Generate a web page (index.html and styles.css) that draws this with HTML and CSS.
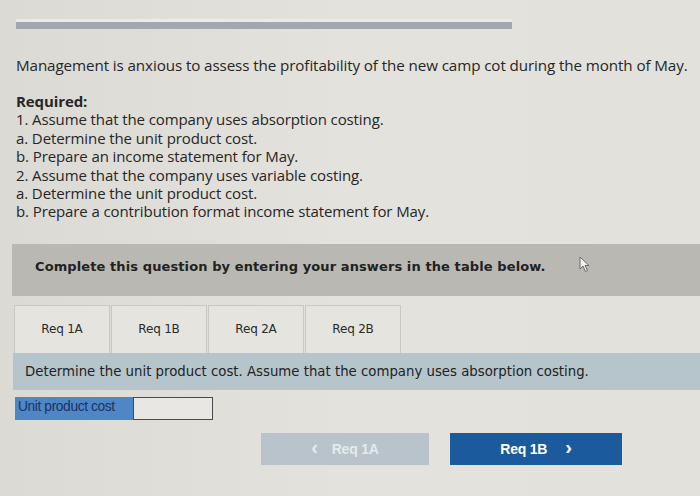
FILE: index.html
```html
<!DOCTYPE html>
<html>
<head>
<meta charset="utf-8">
<link rel="stylesheet" href="styles.css">
</head>
<body>
<div class="page">
  <div class="topbar">
    <div class="topbar-line"></div>
    <div class="topbar-fill"></div>
  </div>
  <p class="intro">Management is anxious to assess the profitability of the new camp cot during the month of May.</p>
  <div class="required">
    <div class="req-title">Required:</div>
    <div>1. Assume that the company uses absorption costing.</div>
    <div>a. Determine the unit product cost.</div>
    <div>b. Prepare an income statement for May.</div>
    <div>2. Assume that the company uses variable costing.</div>
    <div>a. Determine the unit product cost.</div>
    <div>b. Prepare a contribution format income statement for May.</div>
  </div>
  <div class="banner">
    <span class="banner-text">Complete this question by entering your answers in the table below.</span>
    <svg class="cursor" width="12" height="17" viewBox="0 0 12 17"><path d="M1 1 L1 13 L4 10 L6.5 15.5 L8.5 14.5 L6 9.5 L10 9.5 Z" fill="#f2f2f0" stroke="#6a6a6a" stroke-width="1"/></svg>
  </div>
  <div class="tabs">
    <div class="tab">Req 1A</div>
    <div class="tab">Req 1B</div>
    <div class="tab">Req 2A</div>
    <div class="tab">Req 2B</div>
  </div>
  <div class="instruction">Determine the unit product cost. Assume that the company uses absorption costing.</div>
  <div class="answer-row">
    <div class="answer-label">Unit product cost</div>
    <div class="answer-input"></div>
  </div>
  <div class="nav">
    <div class="btn btn-prev"><span class="chev chev-left">&lsaquo;</span>Req 1A</div>
    <div class="btn btn-next">Req 1B<span class="chev chev-right">&rsaquo;</span></div>
  </div>
</div>
</body>
</html>
```
FILE: styles.css
```css
html, body {
  margin: 0;
  padding: 0;
}
body {
  width: 700px;
  height: 496px;
  overflow: hidden;
  background: linear-gradient(90deg, #dcdad4 0%, #e4e2dc 50%, #e3e1db 100%);
  font-family: "Open Sans", "Liberation Sans", sans-serif;
  color: #262626;
}
.page {
  padding-top: 19px;
}
.topbar {
  margin-left: 16px;
  width: 496px;
}
.topbar-line {
  height: 3px;
  background: #ebeae6;
}
.topbar-fill {
  height: 7px;
  background: #a4a8ae;
}
.intro {
  margin: 26px 0 0 16px;
  font-size: 15.2px;
  line-height: 20px;
  letter-spacing: -0.1px;
}
.required {
  margin: 17px 0 0 16px;
  font-size: 15px;
  line-height: 18.4px;
  letter-spacing: -0.1px;
}
.req-title {
  font-weight: 700;
}
.banner {
  margin: 23px 0 0 12px;
  height: 52px;
  box-sizing: border-box;
  padding-bottom: 7px;
  background: #b9b8b3;
  display: flex;
  align-items: center;
  position: relative;
}
.banner-text {
  margin-left: 23px;
  font-family: "DejaVu Sans", sans-serif;
  font-weight: 700;
  font-size: 13px;
  letter-spacing: 0.1px;
  color: #222;
}
.cursor {
  position: absolute;
  left: 567px;
  top: 12px;
}
.tabs {
  display: flex;
  gap: 1px;
  margin: 9px 0 0 14px;
}
.tab {
  width: 94px;
  height: 47px;
  border: 1px solid #c9c8c2;
  border-bottom: none;
  background: #e5e4df;
  display: flex;
  align-items: center;
  justify-content: center;
  font-family: "DejaVu Sans", sans-serif;
  font-size: 12px;
  letter-spacing: -0.2px;
  color: #2a2a2a;
}
.instruction {
  margin-left: 13px;
  height: 37px;
  background: #b6c5cc;
  display: flex;
  align-items: center;
  padding-left: 12px;
  font-family: "DejaVu Sans", sans-serif;
  font-size: 13.3px;
  color: #222;
}
.answer-row {
  display: flex;
  margin: 7px 0 0 15px;
  height: 23px;
}
.answer-label {
  width: 115px;
  background: #4f87c6;
  color: #1d3262;
  font-family: "Liberation Sans", sans-serif;
  font-size: 13.8px;
  letter-spacing: -0.4px;
  padding-left: 3px;
  line-height: 19px;
}
.answer-input {
  width: 78px;
  border: 1px solid #4a4a4a;
  background: #e8e7e3;
}
.nav {
  display: flex;
  margin: 13px 0 0 261px;
  gap: 21px;
}
.btn {
  height: 32px;
  display: flex;
  align-items: center;
  justify-content: center;
  font-family: "Liberation Sans", sans-serif;
  font-size: 14px;
  font-weight: 700;
  letter-spacing: -0.2px;
}
.btn-prev {
  width: 168px;
  background: #b8c3cb;
  color: #e4eaee;
}
.btn-next {
  width: 172px;
  background: #1c5a9e;
  color: #ffffff;
}
.chev {
  font-size: 20px;
  line-height: 20px;
  font-weight: 700;
  margin-top: -3px;
}
.chev-left {
  margin-right: 14px;
}
.chev-right {
  margin-left: 18px;
}
```
